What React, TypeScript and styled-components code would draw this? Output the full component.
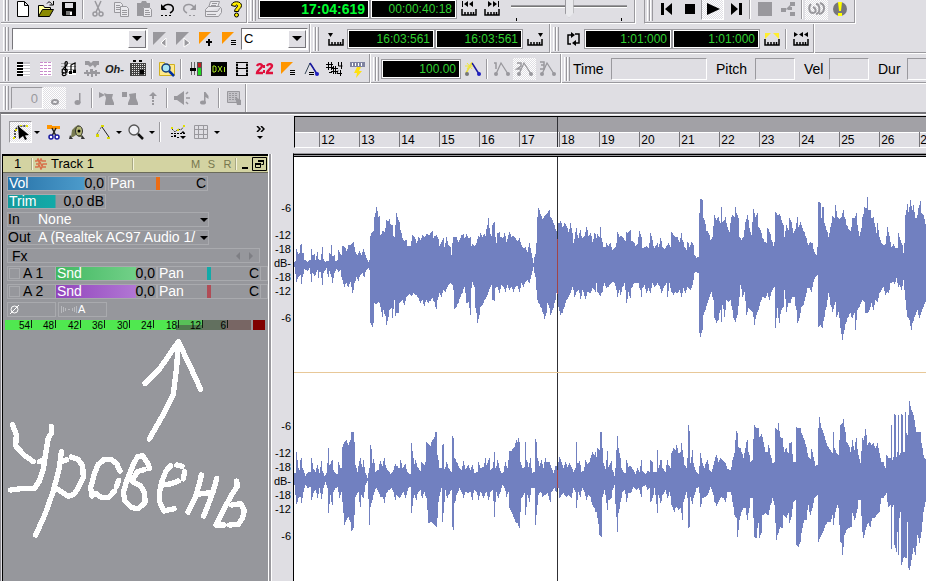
import React, { useState } from "react";
import styled, { createGlobalStyle, css } from "styled-components";

const FACE = "#dfdee3";
const SHADE = "#9a999e";
const PANEL = "#96979c";
const EDGE = "#a9aaae";
const WAVE = "#7180c0";

const GlobalStyle = createGlobalStyle`
  * { box-sizing: border-box; }
  body {
    margin: 0;
    overflow: hidden;
    background: ${FACE};
    color: #000;
    font: 13px/16px "Liberation Sans", Arial, sans-serif;
  }
  button, input, select { font: inherit; color: inherit; margin: 0; }
`;

/* ---------- page frame ---------- */

const Page = styled.div`
  display: flex;
  flex-direction: column;
  height: 100vh;
  overflow: hidden;
`;

const Band = styled.div<{ $first?: boolean; $last?: boolean }>`
  display: flex;
  flex: none;
  height: ${(p) => (p.$last ? 28 : 30)}px;
  margin-top: ${(p) => (p.$first ? -6 : 0)}px;
  padding-left: 1px;
  border-bottom: ${(p) => (p.$last || p.$first ? "none" : `1px solid #fff`)};
  box-shadow: ${(p) => (p.$last || p.$first ? "none" : `inset 0 -1px ${SHADE}`)};
  overflow: hidden;
`;

const Group = styled.div<{ $open?: boolean; $ruled?: boolean; $apart?: boolean; $pad?: number }>`
  display: flex;
  flex: ${(p) => (p.$open ? "1" : "none")};
  align-items: center;
  padding-right: ${(p) => p.$pad ?? 2}px;
  margin-left: ${(p) => (p.$apart ? 8 : 0)}px;
  border-left: ${(p) => (p.$apart ? `1px solid ${SHADE}` : "none")};
  border-right: ${(p) => (p.$open ? "none" : "1px solid #fff")};
  box-shadow: ${(p) => (p.$open ? "none" : `inset -1px 0 ${SHADE}`)};
  ${(p) =>
    p.$ruled &&
    css`
      border-bottom: 1px solid #fff;
      box-shadow: inset -1px -1px ${SHADE};
    `}
`;

const Grip = styled.span`
  flex: none;
  width: 6px;
  height: 24px;
  margin: 0 2px;
  background: linear-gradient(
    90deg,
    #fff 1px, ${FACE} 1px, ${FACE} 2px, ${SHADE} 2px, ${SHADE} 3px,
    #fff 3px, #fff 4px, ${FACE} 4px, ${FACE} 5px, ${SHADE} 5px
  );
`;

const Divider = styled.span`
  flex: none;
  width: 2px;
  height: 20px;
  margin: 0 2px;
  border-left: 1px solid ${SHADE};
  border-right: 1px solid #fff;
`;

const ToolButton = styled.button<{ $pressed?: boolean; $framed?: boolean }>`
  display: flex;
  flex: none;
  align-items: center;
  justify-content: center;
  width: 23px;
  height: 22px;
  padding: 0;
  border: ${(p) => (p.$framed ? "1px solid" : "none")};
  border-color: ${SHADE} #fff #fff ${SHADE};
  background: ${(p) =>
    p.$pressed ? `repeating-conic-gradient(#fff 0 25%, ${FACE} 0 50%) 0 0 / 2px 2px content-box` : "none"};
`;

const Glyph = styled.svg`
  display: block;
  flex: none;
  width: 20px;
  height: 20px;
`;

const Lyrics = styled.span`
  font-size: 11px;
  font-style: italic;
  font-weight: 700;
  color: #222;
`;

/* ---------- icons, drawn on a 20 by 20 pixel grid ---------- */

const grey = "#99989d";
const orange = "#ff9600";

const rulerMark = <path d="M3 10v6h14v-6M6 13v3M9 13v3M12 13v3M14.500 13v3" stroke="#000" strokeWidth="1.500" fill="none" />;

const nodes = (c: string, dot: string) => (
  <g shapeRendering="auto">
    <path d="M4 15L9 4L16 15" stroke={c} strokeWidth="1.300" fill="none" />
    <circle cx="16" cy="15" r="2" fill={dot} />
    <circle cx="4" cy="15" r="2" fill={dot} />
  </g>
);

const ICONS: Record<string, React.ReactNode> = {
  new: <path d="M4.500 2.500h7l4 4v11h-11zM11.500 2.500v4h4" fill="#fff" stroke="#000" />,
  open: (
    <g stroke="#000">
      <path d="M2.500 17.500v-11h5l1 2h6v3" fill="#ffff9a" />
      <path d="M2.500 17.500l4-7h11l-4 7z" fill="#8a8a00" />
      <path d="M11 4.500c2-3 4-1 5 1M17.500 2v4h-4" fill="none" />
    </g>
  ),
  save: (
    <g>
      <path d="M3 3h14v14H4l-1-1z" />
      <path d="M6 4h8v5H6z" fill="#dfdee3" />
      <path d="M7 12h6v4H7z" fill="#777" />
      <path d="M11 13h2v3h-2z" fill="#fff" />
    </g>
  ),
  cut: (
    <g stroke={grey} fill="none" strokeWidth="1.500">
      <path d="M7 2l5 11M13 2L8 13" />
      <circle cx="7" cy="15" r="2" />
      <circle cx="13" cy="15" r="2" />
    </g>
  ),
  copy: (
    <g stroke={grey} fill="#e9e8ec">
      <path d="M3.500 3.500h6l2 2v8h-8zM5 6.500h4M5 8.500h5M5 10.500h5" />
      <path d="M9.500 7.500h6l2 2v8h-8zM11 11.500h5M11 13.500h5M11 15.500h5" />
    </g>
  ),
  paste: (
    <g fill={grey}>
      <path d="M3 4h4l1-2h4l1 2h3v4H9v9H3z" />
      <path d="M9.500 8.500h6l2 2v7h-8z" fill="#e9e8ec" stroke={grey} />
      <path d="M11 11h4v1h-4zM11 13h5v1h-5zM11 15h5v1h-5z" />
    </g>
  ),
  undo: (
    <g>
      <path d="M6 9c1-4 8-5 10-1 1 3-1 5-3 6" fill="none" stroke="#000" strokeWidth="1.500" />
      <path d="M4 5v6h6zM4 16h2v1H4zM8 16h2v1H8zM12 16h2v1h-2z" />
    </g>
  ),
  redo: (
    <g fill={grey}>
      <path d="M14 9c-1-4-8-5-10-1-1 3 1 5 3 6" fill="none" stroke={grey} strokeWidth="1.500" />
      <path d="M16 5v6h-6zM9 16h2v1H9zM13 16h2v1h-2z" />
    </g>
  ),
  print: (
    <g stroke={grey} fill="#e9e8ec">
      <path d="M7.500 2.500h9l-2 6h-9zM9 4.500h5M8 6.500h5" />
      <path d="M2.500 10.500l3-3h11l2 2v4l-3 4h-13zM2.500 12.500h12l3-4M4 15.500h9" />
    </g>
  ),
  help: (
    <g stroke="#000" fill="#ffee00">
      <path d="M5.500 6.500c0-5 10-5 10 0 0 3-3 3-3 6h-4c0-3 3-4 3-5.500 0-1.500-2-1.500-2 .5z" />
      <circle cx="10.500" cy="16" r="2" />
    </g>
  ),
  prevMark: (
    <g>
      <path d="M3 2h1v6H3zM9 2v6L5 5zM14 2v6l-4-3z" />
      {rulerMark}
    </g>
  ),
  nextMark: (
    <g>
      <path d="M16 2h1v6h-1zM11 2v6l4-3zM6 2v6l4-3z" />
      {rulerMark}
    </g>
  ),
  toStart: <path d="M4 4h3v12H4zM15 4v12l-7-6z" />,
  stop: <path d="M5 5h10v10H5z" />,
  play: <path d="M4 4l13 6-13 6z" />,
  toEnd: <path d="M13 4h3v12h-3zM5 4v12l7-6z" />,
  record: <path d="M3 3h14v14H3z" fill={grey} />,
  chain: <path d="M3 9h5v4H3zM8 10l5-5v2l-4 4zM12 3h5v4h-5zM12 13h5v4h-5zM10 8h4v3h-4z" fill={grey} />,
  loopAudio: (
    <g fill="none" stroke={grey} strokeWidth="2">
      <path d="M4 5c-3 3-2 9 2 9s3-5 0-6" />
      <path d="M9 5c4 0 5 9 0 10" />
      <path d="M13 4c6 2 5 10-1 11" />
    </g>
  ),
  alert: (
    <g>
      <circle cx="10" cy="10" r="7" fill="#77767b" />
      <path d="M8 3h4l-1 9H9zM8 14h4v3H8z" fill="#ffff00" />
    </g>
  ),
  cueOff: (
    <g>
      <path d="M3 3h13L3 16z" fill={grey} />
      <path d="M16 9v9l-5-4z" fill={grey} stroke="#fff" />
    </g>
  ),
  cueNextOff: (
    <g>
      <path d="M3 3h13L3 16z" fill={grey} />
      <path d="M11 9v9l6-4z" fill={grey} stroke="#fff" />
    </g>
  ),
  cueAdd: (
    <g>
      <path d="M3 3h12L3 15z" fill={orange} />
      <path d="M12 10h2v2h2v2h-2v3h-2v-3h-2v-2h2z" />
    </g>
  ),
  cueList: (
    <g>
      <path d="M3 3h12L3 15z" fill={orange} />
      <path d="M12 11h5v1h-5zM12 13h5v1h-5zM12 15h5v1h-5z" />
    </g>
  ),
  fromMark: (
    <g>
      <path d="M2 4h5L4.500 8z" />
      {rulerMark}
    </g>
  ),
  thruMark: (
    <g>
      <path d="M13 4h5l-2.500 4z" />
      {rulerMark}
    </g>
  ),
  loop: (
    <g>
      <path d="M8 15H5V6h4M12 5h4v9h-4" fill="none" stroke="#000" strokeWidth="1.500" />
      <path d="M8 3v6l4-3zM13 11v6l-4-3z" />
    </g>
  ),
  loopSet: (
    <g>
      <path d="M3 4h6L3 10zM17 4h-6l6 6z" fill="#ffee30" />
      {rulerMark}
    </g>
  ),
  punch: (
    <g>
      <path d="M3 3v5l4-2.500zM12 3v5L8 5.500zM17 3v5l-4-2.500z" />
      {rulerMark}
    </g>
  ),
  piano: (
    <g>
      <path d="M4 3h13v14H4z" fill="#fff" />
      <path d="M4 3h6v2H4zM4 6h6v2H4zM4 9h6v2H4zM4 12h6v2H4zM4 15h6v2H4z" />
      <path d="M10 3h7v2h-7zM10 6h7v1h-7zM10 9h7v1h-7zM10 12h7v1h-7zM10 15h7v1h-7z" fill="#c4c3c8" />
    </g>
  ),
  eventList: (
    <g>
      <path d="M4 3h12v14H4z" fill="#fff" />
      <path d="M4 3.500h12M4 6.500h12M4 9.500h12M4 12.500h12M4 15.500h12" stroke="#c98acb" strokeDasharray="3 1" />
    </g>
  ),
  staff: (
    <g>
      <path d="M9 4h8v12H9z" fill="#fff" />
      <path d="M2 4.500h15M2 7.500h15M2 10.500h15M2 13.500h15" stroke="#777" strokeWidth=".6" />
      <path
        d="M7 16c-4 2-5-2-2-2M7 16L6 4c1-3 4-1 1 3-5 4-5 7-1 7 4-1 2-6-1-3M12 13V6l4-2v8"
        fill="none"
        stroke="#000"
        strokeWidth="1.200"
      />
      <path d="M10 12h3v3h-3zM14 11h3v3h-3z" />
    </g>
  ),
  audioView: (
    <g fill={grey}>
      <path d="M3 2h4l2 2 2-2h6v4h-2l-2 3-2-3-3 2-2-2H3z" />
      <path d="M2 13h2v-2h2v2h2v-3h3v2h2v-1h2v2h3v2h-3v2h-2v-2h-2v3H9v-3H7v2H5v-2H2z" />
    </g>
  ),
  console: (
    <g>
      <path d="M5 1h3v2H5zM11 1h3v2h-3z" />
      <path d="M2 4h16v13H2z" fill="#444" />
      <path d="M4.500 5v11M6.500 5v11M8.500 5v11M10.500 5v11M12.500 5v5M14.500 5v5M16.500 5v11" stroke="#e8e8e8" strokeDasharray="1 1" />
      <path d="M12 11h4v4h-4z" />
    </g>
  ),
  search: (
    <g>
      <path d="M2.500 16.500v-13h5l1 2h9v11z" fill="#ffe98a" stroke="#d0b020" />
      <circle cx="9" cy="9" r="4" fill="#a8e4f4" stroke="#123a78" strokeWidth="1.500" />
      <path d="M12 12l5 5" stroke="#0030a0" strokeWidth="2.500" />
    </g>
  ),
  fader: (
    <g>
      <path d="M5 3h1v13H5zM8 3h1v13H8z" fill="#666" />
      <path d="M4 9h6v3H4z" />
      <path d="M11 3h5v14h-5z" fill="#555" />
      <path d="M12 4h3v4h-3z" fill="#c02020" />
      <path d="M12 9h3v7h-3z" fill="#20d820" />
    </g>
  ),
  dxi: (
    <g>
      <path d="M2 3h16v14H2z" />
      <path d="M4 7v6h2l1-1V8L6 7zM9 7l4 6M13 7l-4 6M15.500 8v5" stroke="#a8e820" fill="none" />
    </g>
  ),
  film: (
    <g>
      <path d="M4 3h2v14H4zM14 3h2v14h-2zM6 3h8v1H6zM6 9h8v1H6zM6 16h8v1H6z" />
      <path d="M5 4v12M15 4v12" stroke="#fff" strokeDasharray="1 2" />
    </g>
  ),
  bigTime: (
    <g fill="none" stroke="#e0103c" strokeWidth="2.400">
      <path d="M2 7c1-3 5-2 5 0 0 2-5 4-5 7h6M12 7c1-3 5-2 5 0 0 2-5 4-5 7h6" />
      <path d="M9 6v3M9 11v3" strokeWidth="2" />
    </g>
  ),
  envList: (
    <g>
      <path d="M4 15L9 4L16 15" stroke="#345" strokeWidth="1" fill="none" shapeRendering="auto" />
      <path d="M9 4l7 11" stroke="#1818a0" strokeWidth="1.500" shapeRendering="auto" />
      <circle cx="16" cy="15" r="2" fill="#2020c0" />
      <path d="M8 13h5v1H8zM8 15h5v1H8z" />
    </g>
  ),
  meterKey: (
    <g stroke="#000" fill="none">
      <path d="M4.500 3v8M7.500 3v8M2 5.500h7M2 8.500h7M9.500 7v8M11.500 7v8M7 9.500h7M7 12.500h7" />
      <path d="M14.500 3v4h4M17.500 3v7M14 11.500l-1 3h5M16.500 11v6M5 13.500h3" />
    </g>
  ),
  midiOut: (
    <g>
      <path d="M3 3h15v5H3z" fill="#7f83a0" />
      <path d="M5.500 4v3M8.500 4v3M11.500 4v3M14.500 4v3" stroke="#fff" />
      <path d="M10 8h4l-2 4h3l-6 7 1-5H7z" fill="#ffe010" />
    </g>
  ),
  tempoAdd: (
    <g>
      <path d="M3 14L9 4" stroke="#eadf40" strokeWidth="1.500" />
      <path d="M9 4l7 11" stroke="#1818a0" strokeWidth="1.500" shapeRendering="auto" />
      <path d="M4 4l5 6M9 3L4 10M2 7h8" stroke="#f0e638" />
      <circle cx="4" cy="15" r="2" fill="#777" />
      <circle cx="16" cy="15" r="2" fill="#2020c0" />
    </g>
  ),
  env1: (
    <g>
      {nodes(grey, grey)}
      <path d="M2 4h2v6" fill="none" stroke={grey} strokeWidth="1.500" />
    </g>
  ),
  env2: (
    <g>
      {nodes(grey, grey)}
      <path d="M2 4h4v3l-4 3h4" fill="none" stroke={grey} strokeWidth="1.500" />
    </g>
  ),
  env3: (
    <g>
      {nodes(grey, grey)}
      <path d="M2 3h4v7H2M3 6h3" fill="none" stroke={grey} strokeWidth="1.500" />
    </g>
  ),
  whole: <ellipse cx="10" cy="14" rx="3" ry="2" fill="none" stroke={grey} strokeWidth="2" />,
  quarter: (
    <g fill={grey}>
      <path d="M11 5h1.500v10H11z" />
      <ellipse cx="9.500" cy="14.500" rx="3" ry="2.500" />
    </g>
  ),
  velPaint: <path d="M2 4l6 3-6 3zM7 5l3 1h6l-1 4 2 5v2H8v-2l1-5z" fill={grey} />,
  velBox: <path d="M2 4h5v5H2zM9 6l7-1v5l2 5v2H8v-2l2-5z" fill={grey} />,
  pitchUp: <path d="M10 4l4 4h-3v3H9V8H6zM9 12h2v2H9zM9 15h2v2H9z" fill={grey} />,
  horn: (
    <g>
      <path d="M2 8h3l7-5v14l-7-5H2z" fill={grey} />
      <path d="M14 6l2-2M14 10h4M14 14l2 2" stroke={grey} strokeWidth="1.500" />
    </g>
  ),
  eighth: (
    <g fill={grey}>
      <path d="M9 4h1.500l3 4v3L10.500 9v6H9z" />
      <ellipse cx="8" cy="14.500" rx="3" ry="2" />
    </g>
  ),
  scrollList: (
    <g>
      <path d="M3.500 3.500h12v11h-12z" fill="#c4c3c8" stroke={grey} />
      <path d="M5 5.500h9M5 7.500h9M5 9.500h9M5 11.500h9" stroke={grey} strokeDasharray="2 1" />
      <path d="M11 9l6 3v5h-4z" fill={grey} />
    </g>
  ),
  pointer: (
    <g>
      <path d="M4 16V8l4-4h8" fill="none" stroke="#222" strokeDasharray="2 1" strokeWidth="1.500" />
      <path d="M7 4l11 9-4 .5 2 3.500-2 1-2-4-4 3z" />
      <path d="M2 15h2v2H2zM4 7h2v2H4zM9 3h2v1H9zM15 3h2v2h-2z" fill="#e8e800" />
    </g>
  ),
  split: (
    <g>
      <path d="M3 3h5v1h8v3H3z" fill={orange} />
      <path d="M8 6l4 8M12 6l-4 8" stroke="#222" strokeWidth="1.500" />
      <circle cx="7" cy="15" r="2" fill="#fff" stroke="#1818a0" strokeWidth="1.500" />
      <circle cx="13" cy="15" r="2" fill="#fff" stroke="#1818a0" strokeWidth="1.500" />
    </g>
  ),
  scrub: (
    <g>
      <path d="M4 15l1-7 3-3 3-2 4 3v9h-3l-3-2-3 2z" fill="#777a50" />
      <ellipse cx="12" cy="9" rx="3.500" ry="5" fill="#b3b676" stroke="#333" />
      <circle cx="12" cy="9" r="1.500" />
      <path d="M3 13l-1 4h4zM15 13l3 4h-4z" fill="#333" />
    </g>
  ),
  envelope: (
    <g>
      <path d="M4 12l5-8" fill="none" stroke="#666" strokeDasharray="2 1" />
      <path d="M9 5l7 10" stroke="#222" />
      <path d="M3 12h3v3H3zM8 3h3v2H8zM14 15h3v2h-3z" fill="#d8d800" />
    </g>
  ),
  zoom: (
    <g>
      <circle cx="8" cy="8" r="5" fill="#efeff4" stroke="#555" strokeWidth="1.300" />
      <path d="M12 12l5 5" stroke="#111" strokeWidth="2.500" />
    </g>
  ),
  autoEnv: (
    <g>
      <path d="M3 11.500h14" stroke="#000" strokeDasharray="2 1" />
      <path d="M4 7l3 3 3-3 3 1 3-4" stroke="#333" fill="none" strokeDasharray="2 1" />
      <path d="M3 5h2v2H3zM9 7h2v2H9zM15 3h2v2h-2z" fill="#e0e000" />
      <path d="M3 14h2v1H3zM6 13h2v2H6zM9 15h2v1H9zM15 9l2 2h-4zM15 17l-3-3h6z" />
    </g>
  ),
  grid: <path d="M3.500 3.500h13v13h-13zM7.500 3v14M12.500 3v14M3 7.500h14M3 12.500h14" fill="none" stroke={grey} />,
};

function Tool({ name, label, pressed, framed }: { name: string; label: string; pressed?: boolean; framed?: boolean }) {
  return (
    <ToolButton type="button" aria-label={label} $pressed={pressed} $framed={framed}>
      <Glyph viewBox="0 0 20 20" aria-hidden="true">
        {ICONS[name]}
      </Glyph>
    </ToolButton>
  );
}

function Tools({ items }: { items: [string, string, boolean?][] }) {
  return (
    <>
      {items.map(([name, label, pressed]) => (
        <Tool key={name} name={name} label={label} pressed={pressed} />
      ))}
    </>
  );
}

/* ---------- toolbar fields ---------- */

const Lcd = styled.output<{ $w: number; $main?: boolean }>`
  flex: none;
  width: ${(p) => p.$w}px;
  height: 20px;
  padding-right: 4px;
  border: 1px solid ${SHADE};
  box-shadow: inset 0 0 0 1px #fff;
  background: #000;
  color: ${(p) => (p.$main ? "#00ff30" : "#30d030")};
  font-size: ${(p) => (p.$main ? 14 : 12)}px;
  font-weight: ${(p) => (p.$main ? 700 : 400)};
  line-height: 18px;
  text-align: right;
`;

const ComboFrame = styled.span<{ $w: number }>`
  display: flex;
  flex: none;
  width: ${(p) => p.$w}px;
  height: 22px;
  margin: 0 0 0 1px;
  padding: 1px;
  border: 1px solid;
  border-color: #77767b #fff #fff #77767b;
  background: #fff;
`;

const ComboSelect = styled.select`
  flex: 1;
  min-width: 0;
  padding: 0 1px;
  border: none;
  background: none;
  appearance: none;
`;

const ComboArrow = styled.span`
  display: flex;
  align-items: center;
  justify-content: center;
  width: 18px;
  border: 1px solid;
  border-color: #fff #77767b #77767b #fff;
  background: ${FACE};
  pointer-events: none;
`;

const Caret = styled.span<{ $size?: number }>`
  flex: none;
  width: 0;
  height: 0;
  border: ${(p) => p.$size ?? 3}px solid transparent;
  border-top-color: #000;
  border-bottom: none;
`;

function Combo({ width, label, value }: { width: number; label: string; value: string }) {
  return (
    <ComboFrame $w={width}>
      <ComboSelect aria-label={label} defaultValue={value}>
        <option>{value}</option>
      </ComboSelect>
      <ComboArrow>
        <Caret $size={5} />
      </ComboArrow>
    </ComboFrame>
  );
}

const SunkInput = styled.input<{ $w: number }>`
  flex: none;
  width: ${(p) => p.$w}px;
  height: 22px;
  padding: 0 4px;
  border: 1px solid;
  border-color: ${SHADE} #fff #fff ${SHADE};
  background: ${FACE};
  text-align: right;
  &:disabled { color: ${SHADE}; }
`;

const FieldLabel = styled.label<{ $w: number }>`
  flex: none;
  width: ${(p) => p.$w}px;
  padding-left: 9px;
  font-size: 14px;
`;

const TimeLabel = styled(FieldLabel)`
  padding-left: 1px;
`;

const Position = styled.input`
  flex: none;
  width: 116px;
  height: 24px;
  margin: 0 8px;
  appearance: none;
  background:
    linear-gradient(#000, #000) 5px 21px / 1px 3px no-repeat,
    linear-gradient(#000, #000) 110px 21px / 1px 3px no-repeat,
    linear-gradient(${SHADE} 1px, #777 1px, #777 2px, #fff 2px) 0 8px / 100% 3px no-repeat;
  &::-webkit-slider-thumb {
    appearance: none;
    width: 9px;
    height: 18px;
    border: 1px solid ${SHADE};
    border-top: none;
    background: #e9e9ec;
    clip-path: polygon(0 0, 100% 0, 100% 75%, 50% 100%, 0 75%);
  }
`;

/* ---------- main area ---------- */

const Main = styled.main`
  display: flex;
  flex: 1;
  min-height: 0;
  border-top: 2px solid #77767b;
  border-left: 1px solid #8c8b90;
  box-shadow: inset 0 1px #fff;
`;

const LeftSide = styled.section`
  display: flex;
  flex: none;
  flex-direction: column;
  width: 292px;
`;

const Palette = styled.div`
  display: flex;
  flex: none;
  align-items: center;
  height: 40px;
  padding: 0 28px 4px 8px;
`;

const DropButton = styled.button`
  display: flex;
  flex: none;
  align-items: center;
  justify-content: center;
  width: 10px;
  height: 20px;
  padding: 0;
  border: none;
  background: none;
`;

const MoreButton = styled(DropButton)`
  flex-direction: column;
  gap: 4px;
  margin-left: auto;
`;

const Pad = styled.span`
  flex: none;
  width: 3px;
`;

const LeftBody = styled.div`
  display: flex;
  flex: 1;
  min-height: 0;
`;

const TrackPane = styled.section`
  flex: none;
  width: 266px;
  margin-left: 1px;
  border: solid #000;
  border-width: 2px 0 0 1px;
  background: ${PANEL};
  overflow: hidden;
`;

const TrackHeader = styled.header`
  display: flex;
  align-items: center;
  height: 17px;
  border-bottom: 1px solid #6b6b5a;
  background: #d3d3a2;
`;

const HeaderCell = styled.span<{ $w: number; $inset?: number }>`
  display: flex;
  flex: none;
  align-items: center;
  gap: 4px;
  width: ${(p) => p.$w}px;
  height: 12px;
  padding-left: ${(p) => p.$inset ?? 0}px;
  border-right: 1px solid #f4f4dc;
  box-shadow: inset -1px 0 #a8a884;
`;

const HeaderKeys = styled.span`
  display: flex;
  gap: 1px;
`;

const MuteSolo = styled.button`
  width: 15px;
  height: 14px;
  padding: 0;
  border: none;
  background: none;
  color: #77774e;
  font-size: 11px;
  line-height: 14px;
`;

const WindowButton = styled(MuteSolo)`
  display: flex;
  align-items: center;
  justify-content: center;
`;

const Rows = styled.div`
  display: flex;
  flex-direction: column;
  gap: 3px;
  padding: 3px 0 3px 4px;
  font-size: 14px;
`;

const Row = styled.div`
  display: flex;
  gap: 2px;
  height: 15px;
`;

const Box = styled.label<{ $w: number }>`
  display: grid;
  flex: none;
  grid-template-columns: auto 1fr;
  width: ${(p) => p.$w}px;
  height: 15px;
  border: 1px solid ${EDGE};
  line-height: 13px;
`;

const Caption = styled.span<{ $light?: boolean }>`
  grid-area: 1 / 1;
  z-index: 1;
  padding-left: 1px;
  color: ${(p) => (p.$light ? "#fff" : "#000")};
  white-space: nowrap;
  pointer-events: none;
`;

const Reading = styled.span`
  grid-area: 1 / 2;
  z-index: 1;
  padding-right: 1px;
  text-align: right;
  pointer-events: none;
`;

const Bar = styled.input<{ $fill?: string; $level?: number; $thumb?: string }>`
  grid-area: 1 / 1 / 2 / 3;
  width: 100%;
  height: 13px;
  appearance: none;
  background: ${(p) => (p.$fill ? `linear-gradient(90deg, ${p.$fill}) 0 0 / ${p.$level}% 100% no-repeat` : "none")};
  &::-webkit-slider-thumb {
    appearance: none;
    width: 4px;
    height: 13px;
    background: ${(p) => p.$thumb ?? "transparent"};
  }
`;

function Level({ name, value, width, fill, level }: { name: string; value: string; width: number; fill: string; level: number }) {
  const [at, setAt] = useState(level);
  return (
    <Box $w={width}>
      <Caption $light>{name}</Caption>
      <Bar type="range" value={at} $fill={fill} $level={at} onChange={(e) => setAt(Number(e.target.value))} />
      <Reading>{value}</Reading>
    </Box>
  );
}

function Pan({ width, thumb }: { width: number; thumb: string }) {
  return (
    <Box $w={width}>
      <Caption $light>Pan</Caption>
      <Bar type="range" defaultValue={50} $thumb={thumb} />
      <Reading>C</Reading>
    </Box>
  );
}

const PortBox = styled.label`
  display: flex;
  align-items: center;
  width: 202px;
  height: 15px;
  border: 1px solid ${EDGE};
  line-height: 13px;
`;

const PortName = styled.span`
  flex: none;
  width: 30px;
`;

const PortSelect = styled.select`
  flex: 1;
  min-width: 0;
  height: 13px;
  padding: 0;
  border: none;
  background: none;
  color: #fff;
  line-height: 13px;
  appearance: none;
  white-space: nowrap;
`;

function Port({ name, value }: { name: string; value: string }) {
  return (
    <PortBox>
      <PortName>{name}</PortName>
      <PortSelect defaultValue={value}>
        <option>{value}</option>
      </PortSelect>
      <Caret $size={4} />
    </PortBox>
  );
}

const FxBox = styled.div`
  display: flex;
  align-items: center;
  justify-content: space-between;
  width: 253px;
  height: 15px;
  padding: 0 4px;
  border: 1px solid ${EDGE};
`;

const FxArrows = styled.svg`
  width: 20px;
  height: 8px;
`;

const SendRow = styled(Row)`
  gap: 0;
  outline: 1px solid ${EDGE};
  outline-offset: -1px;
`;

const SendSwitch = styled.label`
  display: flex;
  align-items: center;
  gap: 3px;
  width: 48px;
  padding-left: 2px;
  line-height: 15px;
`;

const SendCheck = styled.input`
  width: 11px;
  height: 11px;
  border: 1px solid ${EDGE};
  appearance: none;
  &:checked { background: #fff; }
`;

const SmallButton = styled.button`
  display: flex;
  align-items: center;
  width: 49px;
  height: 15px;
  padding: 0 1px;
  border: 1px solid ${EDGE};
  background: none;
  color: #fff;
  font-size: 11px;
  line-height: 13px;
`;

const Meter = styled.div`
  display: flex;
  width: 260px;
  height: 10px;
  margin-left: 2px;
`;

const MeterScale = styled.div`
  display: flex;
  flex: 1;
  margin-right: 2px;
  background:
    linear-gradient(#50e850, #50e850) 0 0 / 171px 100% no-repeat,
    linear-gradient(#58c058 5px, #4f7a4d 5px) 171px 0 / 26px 100% no-repeat,
    linear-gradient(#62705f, #62705f) 197px 0 / 24px 100% no-repeat,
    #786664;
`;

const MeterMark = styled.span<{ $w: number }>`
  flex: none;
  width: ${(p) => p.$w}px;
  height: 8px;
  padding-right: 1px;
  border-right: 1px solid #102010;
  font-size: 10px;
  line-height: 11px;
  text-align: right;
`;

const Clip = styled.span`
  width: 12px;
  background: #800000;
`;

const Note = styled.svg`
  display: block;
  width: 264px;
  height: 246px;
`;

const Gutter = styled.div`
  flex: 1;
  border-left: 1px solid #fff;
  box-shadow: inset 2px 0 ${SHADE}, inset 3px 0 #fff;
  overflow: hidden;
`;

const Scale = styled.div<{ $top?: boolean }>`
  display: flex;
  flex-direction: column;
  align-items: flex-end;
  height: 217px;
  padding: ${(p) => (p.$top ? 47 : 48)}px 2px 0 0;
  font-size: 11px;
  line-height: 14px;
`;

const ScaleMark = styled.span<{ $before?: boolean; $after?: boolean }>`
  margin-top: ${(p) => (p.$before ? 13 : 0)}px;
  margin-bottom: ${(p) => (p.$after ? 13 : 0)}px;
`;

const RightSide = styled.section`
  display: flex;
  flex: 1;
  flex-direction: column;
  min-width: 0;
  padding-top: 2px;
`;

const Ruler = styled.div`
  position: relative;
  flex: none;
  height: 32px;
  margin-left: 1px;
  border-top: 1px solid #000;
  border-left: 1px solid #000;
  border-bottom: 1px solid #fff;
  background: linear-gradient(#a2a1a6 15px, #fff 15px, #fff 16px, ${FACE} 16px);
`;

const RulerMarks = styled.div`
  display: flex;
  padding-top: 15px;
`;

const RulerMark = styled.span<{ $grow: number }>`
  flex: ${(p) => p.$grow} 1 0;
  min-width: 0;
  height: 15px;
  border-left: 1px solid #77767b;
  font-size: 12px;
  line-height: 16px;
  text-indent: ${(p) => (p.$grow > 6 ? 1 : 0)}px;
  overflow: hidden;
`;

const RulerStart = styled.span`
  flex: 25 1 0;
`;

const PlayLine = styled.span`
  position: absolute;
  top: 0;
  bottom: 0;
  left: calc(41% + 3px);
  width: 1px;
  background: #303035;
`;

const Clips = styled.div`
  flex: 1;
  min-height: 0;
  margin-top: 5px;
  border-top: 1px solid ${SHADE};
  border-left: 1px solid #000;
  background: linear-gradient(#000 1px, ${SHADE} 1px, ${SHADE} 2px, #000 2px, #000 3px, #fff 3px);
  padding-top: 3px;
  overflow: hidden;
`;

const Lane = styled.svg`
  display: block;
  width: 100%;
  height: 216px;
  border-bottom: 1px solid #e8c898;
`;

/* ---------- waveform envelopes ----------
   Each list holds x,y corners of an outline; units are a third of a pixel.
   The second half of a channel continues HALF units to the right. */

const HALF = 978;

const LEFT_TOP_A =
  "72,455 78,452 80,417 84,432 88,430 92,405 95,403 97,428 100,428 104,450 112,455 120,450 125,417 128,435 132,433 136,450 142,425 146,448 152,450 156,411 158,445 165,455 174,452 178,430 182,432 185,405 188,438 192,436 196,453 202,450 206,420 210,433 214,435 218,408 224,410 230,422 236,405 244,403 250,397 256,425 262,436 268,424 274,434 280,418 286,436 294,455 298,450 301,378 306,365 311,363 314,320 319,292 323,302 326,320 329,318 332,375 338,362 342,366 346,355 350,330 354,333 358,328 362,342 366,345 370,378 374,382 378,310 381,322 385,330 389,335 392,360 397,385 402,392 408,390 413,408 420,408 428,375 434,382 440,398 446,382 452,390 458,376 464,382 470,372 476,376 482,370 486,362 489,385 494,378 500,374 504,386 508,408 514,395 519,385 524,410 530,380 534,405 540,410 544,436 548,400 551,382 558,380 564,395 568,390 575,375 580,372 584,384 590,372 594,385 600,382 603,408 608,402 614,408 620,398 624,378 628,380 632,370 637,380 642,372 647,378 650,358 655,325 660,372 664,378 668,345 672,335 676,380 680,400 682,370 688,365 692,380 698,385 704,370 710,395 718,365 724,380 730,378 736,385 742,392 748,385 754,405 760,415 766,412 772,425 778,398 784,430 790,458 795,432 799,400 802,320 806,294 812,312 818,328 824,318 830,312 837,300 842,320 846,330 852,345 858,362 862,370 866,340 872,333 878,350 884,340 890,348 896,365 902,340 906,370 911,398 918,355 924,385 930,360 936,385 942,378 950,352 956,378 962,370 968,395 974,370 977,372";
const LEFT_TOP_B =
  "0,385 4,372 9,380 13,352 17,385 22,412 27,412 31,398 36,408 42,400 50,420 56,415 62,400 65,365 70,380 76,378 82,385 88,392 91,365 95,370 100,362 103,360 107,392 113,395 118,408 124,402 130,362 135,380 140,415 146,412 152,408 158,415 164,368 168,390 174,415 180,405 184,400 188,412 194,385 200,410 206,418 212,408 218,400 223,410 227,365 232,375 238,382 244,382 250,395 256,370 260,390 266,410 271,420 275,395 281,410 286,395 292,405 296,435 301,445 306,440 309,310 313,266 318,270 321,325 326,330 332,362 338,368 344,390 350,382 354,315 360,330 366,320 372,340 376,292 380,335 386,330 388,320 393,350 400,365 405,320 410,315 414,320 418,290 422,310 427,325 431,380 436,390 442,380 449,335 455,315 460,355 466,375 472,298 478,320 483,310 487,350 494,360 500,385 506,395 512,400 515,355 521,365 527,390 533,408 536,395 539,305 545,315 551,312 556,330 562,345 566,380 570,345 576,360 580,325 586,335 592,370 598,358 604,322 608,350 614,335 618,355 624,365 630,385 636,405 642,395 648,400 654,425 660,435 665,410 668,275 673,280 676,325 679,290 683,290 686,340 692,360 698,380 704,350 710,318 714,325 718,285 724,320 730,328 736,320 742,300 746,320 752,345 758,358 764,362 770,325 776,325 780,310 784,345 790,378 796,355 800,320 806,292 811,295 815,260 818,300 822,300 826,325 832,320 837,350 840,370 844,340 850,380 856,398 862,405 868,402 874,352 880,378 886,412 892,402 898,415 903,415 907,370 912,390 918,405 923,430 926,400 929,315 933,282 938,305 943,270 948,300 953,285 957,325 962,325 968,295 973,272 977,310 982,315 990,350";
const LEFT_BOTTOM_A =
  "72,470 80,515 84,500 90,495 95,522 98,500 104,478 112,482 118,475 125,515 128,490 134,498 142,480 145,505 148,485 152,485 156,525 160,490 168,475 174,500 178,482 184,500 188,518 192,490 200,478 205,485 210,480 216,510 222,530 228,520 234,532 240,515 248,548 254,520 260,500 264,512 270,495 276,490 282,502 288,480 295,475 298,480 301,640 306,650 311,640 314,580 320,582 326,575 332,590 336,620 340,600 345,618 350,645 354,620 359,600 363,595 368,625 372,570 376,618 380,610 386,608 389,580 396,570 402,585 410,560 418,552 424,558 430,550 438,555 444,565 450,578 456,570 462,588 468,570 474,578 480,572 486,565 492,575 498,598 502,570 508,550 514,560 520,540 526,545 532,530 540,520 546,525 550,540 554,598 558,590 564,580 570,560 576,548 582,530 586,550 590,580 596,575 600,615 603,535 606,515 612,530 616,595 620,610 623,640 627,615 632,590 638,585 644,570 650,560 655,545 660,530 664,525 668,570 672,572 675,535 682,530 688,548 694,525 700,530 706,545 712,525 718,540 724,530 730,545 736,530 742,528 748,545 754,520 760,530 766,515 772,510 778,520 784,495 790,470 795,500 798,540 801,570 806,580 812,590 818,605 824,628 828,610 832,580 836,585 842,615 848,600 854,580 860,550 866,590 870,615 876,608 882,590 890,570 900,550 908,530 914,560 920,545 926,540 932,568 938,540 946,568 952,545 960,550 968,535 976,545";
const LEFT_BOTTOM_B =
  "0,520 4,545 12,558 18,545 24,518 30,535 36,530 42,522 50,515 56,520 62,540 65,560 69,540 74,555 80,530 86,520 92,580 97,545 102,565 107,535 114,518 120,520 126,520 132,540 136,560 140,535 145,525 151,548 157,535 163,550 169,520 176,530 184,520 190,528 196,548 202,535 210,520 215,560 220,520 226,545 232,555 238,545 244,550 250,540 256,560 262,535 268,550 274,530 282,540 290,525 295,490 300,485 306,490 309,670 313,680 318,660 321,615 327,600 333,580 340,560 346,545 351,570 356,625 361,640 366,630 372,600 376,635 380,585 386,620 391,570 397,575 403,570 408,600 413,625 418,635 424,615 430,560 434,525 440,560 446,545 451,615 458,595 464,600 470,605 475,645 480,615 487,600 494,575 500,560 508,565 514,550 520,570 526,545 534,530 539,655 543,595 549,640 555,600 561,590 566,540 571,605 576,580 582,580 588,560 594,560 600,600 604,640 610,625 616,590 622,585 628,560 634,535 640,535 646,545 652,515 658,500 665,495 668,650 673,645 679,655 684,620 690,590 698,550 704,585 710,605 717,575 722,620 728,605 733,655 739,690 744,660 750,635 756,620 762,610 768,625 774,610 779,660 783,600 790,590 798,570 804,575 809,610 814,610 820,600 826,580 832,600 838,570 844,575 850,550 856,540 862,530 868,555 874,545 878,550 884,520 890,515 896,522 901,505 906,530 911,525 916,540 923,510 926,540 930,600 935,620 940,630 945,660 950,640 956,620 963,600 970,625 976,605 982,590 990,570";
const RIGHT_TOP_A =
  "72,385 78,385 80,322 84,370 88,375 92,345 95,338 98,370 106,392 114,380 120,382 125,340 130,372 136,380 142,360 148,385 154,348 158,378 164,392 170,385 175,308 179,360 186,345 190,375 196,385 202,388 206,350 210,368 214,370 217,305 222,290 228,285 234,300 240,285 245,262 250,260 253,290 256,360 262,380 270,338 276,365 280,345 286,385 293,398 297,370 300,300 304,312 307,355 311,342 317,380 324,375 330,348 337,362 342,338 348,370 355,378 362,388 368,380 375,358 380,362 387,370 392,345 398,370 405,358 412,380 420,388 425,295 429,340 433,358 437,345 442,365 450,378 455,350 462,360 466,350 469,292 475,298 480,302 486,285 491,283 497,260 500,262 503,330 508,370 514,370 517,300 520,298 524,372 530,350 536,370 543,380 547,272 551,280 554,338 560,350 568,370 575,375 580,348 586,372 594,360 600,375 607,360 614,385 621,380 624,350 632,370 640,365 646,340 650,360 657,338 662,375 668,370 673,322 677,370 683,345 688,368 694,385 700,380 705,350 711,370 715,345 718,318 724,318 730,308 734,305 738,285 742,290 746,280 749,290 751,350 757,370 763,365 767,290 770,345 776,365 780,340 786,385 793,380 797,282 800,290 803,340 808,362 814,345 820,368 825,340 830,350 838,350 845,370 850,385 856,362 862,365 868,335 874,350 880,370 887,350 892,365 898,355 904,365 910,380 916,370 920,292 923,355 929,348 935,380 941,378 946,345 952,358 957,350 961,340 967,320 972,330 977,320";
const RIGHT_TOP_B =
  "0,335 5,308 10,315 13,262 17,260 19,310 22,355 28,372 34,318 38,365 45,348 50,375 55,392 59,370 62,315 65,272 68,310 72,340 76,370 82,380 88,385 92,345 97,365 103,362 110,372 118,388 124,370 130,380 136,345 140,378 147,388 155,378 160,380 164,345 169,350 173,380 180,380 184,315 188,370 193,345 197,345 200,370 208,382 213,345 218,360 224,370 227,325 232,310 238,315 242,300 247,325 253,320 257,295 261,335 266,360 272,370 275,340 278,240 281,258 284,355 288,315 292,355 298,375 306,388 310,362 314,325 318,355 324,368 330,350 335,345 340,375 346,382 352,360 358,335 362,330 367,350 374,340 380,345 387,355 395,372 404,375 410,345 415,325 420,258 424,265 427,305 432,310 437,320 442,340 446,325 450,290 455,285 458,320 464,350 469,345 474,240 480,250 486,250 491,275 497,268 502,290 508,320 514,320 518,300 524,330 530,355 534,350 538,250 543,255 547,235 552,275 558,280 564,320 570,310 576,325 580,295 586,290 591,350 598,350 602,245 606,250 612,250 618,270 624,285 630,305 636,335 642,342 647,312 652,335 658,362 663,360 666,250 670,217 676,250 683,265 690,295 696,305 703,315 708,325 712,262 716,310 722,325 728,330 732,240 738,235 742,222 746,245 752,290 758,300 764,320 769,285 774,315 780,280 786,330 794,355 798,280 803,285 809,252 814,300 820,290 826,300 832,295 838,310 844,295 850,325 856,350 861,350 867,368 872,330 878,340 884,340 886,240 889,345 893,335 895,208 899,210 902,335 905,320 907,210 909,330 915,320 917,208 920,210 922,320 925,320 927,202 930,265 935,270 938,210 941,168 945,195 950,200 955,225 960,260 966,260 972,262 978,310 984,340 990,345";
const RIGHT_BOTTOM_A =
  "72,420 80,478 85,460 90,455 95,475 99,440 106,420 114,430 120,425 125,465 129,445 136,435 143,458 148,430 155,462 159,430 166,410 172,430 176,505 180,450 186,480 190,440 196,430 202,425 208,458 214,440 218,470 222,540 228,525 234,515 240,530 245,558 250,550 254,510 257,455 264,440 270,485 274,450 280,460 286,420 293,408 298,540 301,485 307,465 312,440 318,430 325,440 332,455 338,455 343,475 348,445 356,435 364,430 370,440 375,465 380,450 388,460 394,450 400,440 407,460 414,430 420,425 425,505 429,460 434,450 438,465 444,440 450,435 456,460 462,440 468,460 471,495 476,535 482,530 488,535 494,540 498,545 502,520 505,470 510,440 514,430 518,530 521,505 525,435 531,460 536,450 543,435 547,545 551,555 554,475 560,450 568,430 575,440 580,460 586,440 594,445 600,440 606,465 612,435 620,440 625,465 632,440 640,460 648,440 656,465 662,440 668,435 673,515 678,440 684,460 690,440 697,420 704,430 710,455 714,440 718,490 724,500 730,515 736,530 742,535 747,550 750,500 755,460 762,445 767,510 772,450 778,470 784,430 792,430 797,540 800,510 804,450 812,440 818,455 825,450 832,445 840,470 845,440 852,430 858,440 864,430 868,460 874,450 880,445 888,455 896,450 904,460 910,430 916,440 920,490 924,440 930,455 936,430 944,440 948,465 954,450 960,455 966,480 974,490 977,500";
const RIGHT_BOTTOM_B =
  "0,500 5,520 11,570 17,575 20,455 26,435 34,495 38,465 45,460 50,435 55,420 60,515 65,560 68,505 74,470 80,440 86,435 92,470 97,445 104,445 112,425 120,435 128,428 135,455 140,425 148,420 155,435 160,430 164,470 170,460 176,430 184,505 188,450 194,475 200,450 208,435 215,460 221,440 227,480 234,500 240,485 248,495 254,490 259,525 263,470 270,440 275,460 278,550 281,545 284,455 288,478 294,450 302,430 308,425 314,485 320,460 328,455 335,450 343,425 350,440 356,470 362,482 368,470 375,455 382,460 389,470 395,440 404,440 410,470 415,510 420,520 425,575 430,525 436,500 442,490 448,490 453,525 460,490 464,460 470,460 474,575 480,580 486,535 489,580 495,565 500,510 508,505 516,510 524,480 530,460 536,480 540,585 545,570 552,545 558,550 563,510 570,520 576,505 580,535 586,515 592,470 598,465 602,600 607,605 612,590 618,550 624,525 630,525 636,480 642,510 648,490 656,460 663,450 667,590 672,575 680,565 688,540 695,530 703,530 710,510 712,540 718,500 724,480 728,490 732,590 736,595 740,630 745,570 752,555 758,550 765,545 770,505 776,525 782,505 788,465 794,465 798,560 803,578 810,545 816,535 822,545 828,520 834,520 842,510 850,500 855,460 862,460 870,445 876,485 882,480 885,480 887,612 889,485 893,480 896,600 900,620 902,480 905,560 908,630 911,520 915,480 917,660 921,640 923,480 926,635 930,640 933,530 936,670 941,675 946,645 952,610 958,630 965,570 970,595 976,560 982,500 990,460";

type Point = [number, number];

const parse = (list: string, shift = 0): Point[] =>
  list.split(" ").map((pair) => {
    const [x, y] = pair.split(",").map(Number);
    return [x + shift, y];
  });

/* One value per three-unit column: a corner inside the column wins, else the straight line between corners. */
function columns(points: Point[], sign: number): number[] {
  const out: number[] = [];
  let i = 0;
  for (let x = 72; x < 1968; x += 3) {
    while (i < points.length - 2 && points[i + 1][0] <= x + 1) i++;
    const [x0, y0] = points[i];
    const [x1, y1] = points[i + 1];
    const ratio = Math.min(1, Math.max(0, (x + 1 - x0) / (x1 - x0)));
    const inside = points.filter(([px]) => px >= x && px < x + 3).map(([, py]) => py);
    const line = y0 + (y1 - y0) * ratio;
    const y = inside.length ? (sign > 0 ? Math.max(...inside) : Math.min(...inside)) : line;
    out.push(Math.round(y / 3) * 3);
  }
  return out;
}

function outline(top: Point[], bottom: Point[]): string {
  const up = columns(top, -1);
  const down = columns(bottom, 1);
  return up.map((y, i) => `M${72 + i * 3} ${y}h3V${down[i]}h-3z`).join("");
}

const LEFT_WAVE = outline(
  [...parse(LEFT_TOP_A), ...parse(LEFT_TOP_B, HALF)],
  [...parse(LEFT_BOTTOM_A), ...parse(LEFT_BOTTOM_B, HALF)],
);
const RIGHT_WAVE = outline(
  [...parse(RIGHT_TOP_A), ...parse(RIGHT_TOP_B, HALF)],
  [...parse(RIGHT_BOTTOM_A), ...parse(RIGHT_BOTTOM_B, HALF)],
);

function Channel({ wave, top, red }: { wave: string; top: number; red: [number, number] }) {
  return (
    <Lane viewBox={`72 ${top} 1896 645`} preserveAspectRatio="none" shapeRendering="crispEdges" aria-label="Waveform">
      <path d={wave} fill={WAVE} />
      <rect x="861" y={top} width="3" height="645" fill="#303035" />
      <rect x="861" y={red[0]} width="3" height={red[1] - red[0]} fill="#a04448" />
    </Lane>
  );
}

const DB_MARKS = ["-6", "-12", "-18", "dB-", "-18", "-12", "-6"];

function DbScale({ top }: { top?: boolean }) {
  return (
    <Scale $top={top}>
      {DB_MARKS.map((mark, i) => (
        <ScaleMark key={i} $after={i === 0} $before={i === DB_MARKS.length - 1}>
          {mark}
        </ScaleMark>
      ))}
    </Scale>
  );
}

const BARS = [12, 13, 14, 15, 16, 17, 18, 19, 20, 21, 22, 23, 24, 25, 26, 27];

export default function App() {
  return (
    <Page>
      <GlobalStyle />
      <Band $first>
        <Group $ruled $pad={0}>
          <Grip />
          <Tools items={[["new", "New"], ["open", "Open"], ["save", "Save"]]} />
          <Divider />
          <Tools
            items={[
              ["cut", "Cut"], ["copy", "Copy"], ["paste", "Paste"], ["undo", "Undo"],
              ["redo", "Redo"], ["print", "Print"], ["help", "Help"],
            ]}
          />
        </Group>
        <Group $ruled $pad={0}>
          <Grip />
          <Lcd $w={112} $main>17:04:619</Lcd>
          <Lcd $w={87}>00:00:40:18</Lcd>
          <Tools items={[["prevMark", "Previous marker"], ["nextMark", "Next marker"]]} />
          <Position type="range" aria-label="Now time" defaultValue={50} />
        </Group>
        <Group $ruled $apart $pad={4}>
          <Grip />
          <Tools items={[["toStart", "Rewind"], ["stop", "Stop"]]} />
          <Tool name="play" label="Play" pressed framed />
          <Tool name="toEnd" label="Go to end" />
          <Divider />
          <Tools items={[["record", "Record"], ["chain", "Step record"]]} />
          <Divider />
          <Tools items={[["loopAudio", "Audio engine", true], ["alert", "Panic"]]} />
        </Group>
      </Band>

      <Band>
        <Group>
          <Grip />
          <Combo width={136} label="Marker" value="" />
          <Tools
            items={[
              ["cueOff", "Previous marker"], ["cueNextOff", "Next marker"],
              ["cueAdd", "Insert marker"], ["cueList", "Marker list"],
            ]}
          />
          <Combo width={67} label="Default key" value="C" />
        </Group>
        <Group $pad={4}>
          <Grip />
          <Pad />
          <Tool name="fromMark" label="Set from" />
          <Lcd $w={88}>16:03:561</Lcd>
          <Lcd $w={88}>16:03:561</Lcd>
          <Tool name="thruMark" label="Set thru" />
        </Group>
        <Group>
          <Grip />
          <Tool name="loop" label="Loop" />
          <Lcd $w={88}>1:01:000</Lcd>
          <Lcd $w={88}>1:01:000</Lcd>
          <Tool name="loopSet" label="Set loop to selection" />
          <Divider />
          <Tool name="punch" label="Auto shuttle" />
        </Group>
      </Band>

      <Band>
        <Group>
          <Grip />
          <Tools
            items={[
              ["piano", "Piano roll"], ["eventList", "Event list"], ["staff", "Staff"], ["audioView", "Loop construction"],
            ]}
          />
          <ToolButton type="button" aria-label="Lyrics">
            <Lyrics>Oh-</Lyrics>
          </ToolButton>
          <Tool name="console" label="Console" />
          <Divider />
          <Tool name="search" label="Explorer" />
          <Divider />
          <Tools
            items={[
              ["fader", "Mixer"], ["dxi", "Synth rack"], ["film", "Video"], ["bigTime", "Big time"],
              ["cueList", "Markers"], ["envList", "Tempo"], ["meterKey", "Meter and key"], ["midiOut", "Sysx"],
            ]}
          />
        </Group>
        <Group>
          <Grip />
          <Lcd $w={80}>100.00</Lcd>
          <Tool name="tempoAdd" label="Insert tempo" />
          <Divider />
          <Tools items={[["env1", "Tempo ratio 1"], ["env2", "Tempo ratio 2", true], ["env3", "Tempo ratio 3"]]} />
        </Group>
        <Group $open>
          <Grip />
          <TimeLabel $w={39} htmlFor="time">Time</TimeLabel>
          <SunkInput id="time" $w={96} />
          <FieldLabel $w={48} htmlFor="pitch">Pitch</FieldLabel>
          <SunkInput id="pitch" $w={40} />
          <FieldLabel $w={34} htmlFor="vel">Vel</FieldLabel>
          <SunkInput id="vel" $w={40} />
          <FieldLabel $w={38} htmlFor="dur">Dur</FieldLabel>
          <SunkInput id="dur" $w={40} />
        </Group>
      </Band>

      <Band $last>
        <Group $pad={1}>
          <Grip />
          <SunkInput $w={32} aria-label="Snap" defaultValue="0" disabled />
          <Tools items={[["whole", "Whole note", true], ["quarter", "Quarter note"]]} />
          <Divider />
          <Tools items={[["velPaint", "Draw velocity"], ["velBox", "Edit velocity"], ["pitchUp", "Pitch up"]]} />
          <Divider />
          <Tools items={[["horn", "Scrub"], ["eighth", "Play note"]]} />
          <Divider />
          <Tool name="scrollList" label="View options" />
        </Group>
      </Band>

      <Main>
        <LeftSide>
          <Palette>
            <Tool name="pointer" label="Select" pressed framed />
            <DropButton type="button" aria-label="Select options"><Caret /></DropButton>
            <Tools items={[["split", "Split"], ["scrub", "Scrub"]]} />
            <Pad />
            <Tool name="envelope" label="Envelope" />
            <DropButton type="button" aria-label="Envelope options"><Caret /></DropButton>
            <Tool name="zoom" label="Zoom" />
            <DropButton type="button" aria-label="Zoom options"><Caret /></DropButton>
            <Divider />
            <Pad />
            <Tools items={[["autoEnv", "Show automation"], ["grid", "Snap to grid"]]} />
            <DropButton type="button" aria-label="Grid options"><Caret /></DropButton>
            <MoreButton type="button" aria-label="More tools">
              <svg width="9" height="6" viewBox="0 0 9 6">
                <path d="M1 0l3 3-3 3M5 0l3 3-3 3" fill="none" stroke="#000" strokeWidth="1.500" />
              </svg>
              <Caret />
            </MoreButton>
          </Palette>
          <LeftBody>
            <TrackPane>
              <TrackHeader>
                <HeaderCell $w={30} $inset={11}>1</HeaderCell>
                <HeaderCell $w={101} $inset={2}>
                  <svg width="12" height="12" viewBox="0 0 12 12">
                    <path
                      d="M0 3h2l1-2 1 3 2-3 1 2h4M1 6h3l1-2 2 4 1-2h4M0 9h3l1-2 2 4 1-2h4"
                      fill="none"
                      stroke="#d8714a"
                      strokeWidth="1.500"
                    />
                  </svg>
                  Track 1
                </HeaderCell>
                <HeaderCell $w={103} $inset={54}>
                  <HeaderKeys>
                    <MuteSolo type="button">M</MuteSolo>
                    <MuteSolo type="button">S</MuteSolo>
                    <MuteSolo type="button">R</MuteSolo>
                  </HeaderKeys>
                </HeaderCell>
                <WindowButton type="button" aria-label="Minimize track">
                  <svg width="8" height="12" viewBox="0 0 8 12"><path d="M1 9h6v2H1z" /></svg>
                </WindowButton>
                <WindowButton type="button" aria-label="Restore track">
                  <svg width="15" height="14" viewBox="0 0 15 14">
                    <path d="M.5.5h14v13H.5zM6.500 3.500h5v4h-2M3.500 6.500h5v4h-5z" fill="none" stroke="#000" />
                    <path d="M6 3h6v2H6zM3 6h6v2H3z" />
                  </svg>
                </WindowButton>
              </TrackHeader>
              <Rows>
                <Row>
                  <Level name="Vol" value="0,0" width={99} fill="#2873a8, #4c9bcb" level={79} />
                  <Pan width={100} thumb="#ec6c14" />
                </Row>
                <Row>
                  <Level name="Trim" value="0,0 dB" width={99} fill="#159a9c, #12aaa8" level={49} />
                </Row>
                <Port name="In" value="None" />
                <Port name="Out" value="A (Realtek AC97 Audio 1/" />
                <FxBox>
                  Fx
                  <FxArrows viewBox="0 0 20 8">
                    <path d="M5 0v8L1 4zM14 0v8l4-4z" fill="#7e7f84" />
                  </FxArrows>
                </FxBox>
                <SendRow>
                  <SendSwitch><SendCheck type="checkbox" />A 1</SendSwitch>
                  <Level name="Snd" value="0,0" width={102} fill="#42b862, #72d088" level={80} />
                  <Pan width={104} thumb="#12aaa8" />
                </SendRow>
                <SendRow>
                  <SendSwitch><SendCheck type="checkbox" />A 2</SendSwitch>
                  <Level name="Snd" value="0,0" width={102} fill="#9144bc, #b177d4" level={80} />
                  <Pan width={104} thumb="#b04c56" />
                </SendRow>
                <Row>
                  <SmallButton type="button" aria-label="Phase">
                    <svg width="11" height="11" viewBox="0 0 11 11">
                      <circle cx="5.500" cy="5.500" r="3.500" fill="none" stroke="#fff" />
                      <path d="M1 10l9-9" stroke="#fff" />
                    </svg>
                  </SmallButton>
                  <SmallButton type="button" aria-label="Interleave A">
                    <svg width="18" height="9" viewBox="0 0 18 9">
                      <path d="M1.500 1v7M3.500 2v5M5.500 3v3M8 4.500h2M12.500 3v3M14.500 2v5M16.500 1v7" stroke="#b9babe" />
                    </svg>
                    A
                  </SmallButton>
                </Row>
              </Rows>
              <Meter role="meter" aria-label="Level" aria-valuemin={-60} aria-valuemax={0} aria-valuenow={-18}>
                <MeterScale>
                  {["54", "48", "42", "36", "30", "24", "18", "12", "6"].map((mark, i) => (
                    <MeterMark key={mark} $w={i === 0 ? 27 : i % 2 ? 24 : 25}>{mark}</MeterMark>
                  ))}
                </MeterScale>
                <Clip />
              </Meter>
              <Note viewBox="9 -13 792 738" shapeRendering="crispEdges" aria-label="Уровень">
                <g fill="none" stroke="#fff" strokeWidth="16" strokeLinecap="round" strokeLinejoin="round">
                  <path d="M448 314L490 240 520 180 530 100 535 22M435 147L480 102 535 22 570 95 602 165" />
                  <path d="M37 271L49 300 47 335 72 362 100 382M118 382L132 376M154 276L155 295 145 310 135 370 130 405 118 440 103 463M103 463L65 463 32 467" />
                  <path d="M184 352L178 400 160 470 135 540 107 602M184 382L200 376M214 368L235 376 248 395 250 430 235 460 222 480 205 486 190 476 172 464" />
                  <path d="M276 485L272 460 284 415 295 390 312 376 335 376 350 388 360 410M356 438L350 455M344 470L325 490 305 490 288 478" />
                  <path d="M448 403L444 388 428 364 412 368 398 395 380 440 370 475 375 500 395 520 415 523 435 505 434 475 422 455 398 442M396 440L412 412 432 406" />
                  <path d="M487 452L515 448 535 440M550 434L554 412M546 396L530 392M512 394L498 410 486 440 478 475 478 500 492 530 522 523" />
                  <path d="M604 422L598 450 585 490 564 534M590 480L630 475M650 432L640 470 625 510 611 545" />
                  <path d="M710 440L712 455 690 490 672 525 648 572 672 572M694 512L722 508 733 528 728 550 715 570 688 572" />
                </g>
              </Note>
            </TrackPane>
            <Gutter>
              <DbScale top />
              <DbScale />
            </Gutter>
          </LeftBody>
        </LeftSide>
        <RightSide>
          <Ruler>
            <RulerMarks>
              <RulerStart />
              {BARS.map((bar) => (
                <RulerMark key={bar} $grow={bar === 27 ? 6 : 40}>{bar}</RulerMark>
              ))}
            </RulerMarks>
            <PlayLine />
          </Ruler>
          <Clips>
            <Channel wave={LEFT_WAVE} top={141} red={[388, 552]} />
            <Channel wave={RIGHT_WAVE} top={84} red={[375, 430]} />
          </Clips>
        </RightSide>
      </Main>
    </Page>
  );
}
